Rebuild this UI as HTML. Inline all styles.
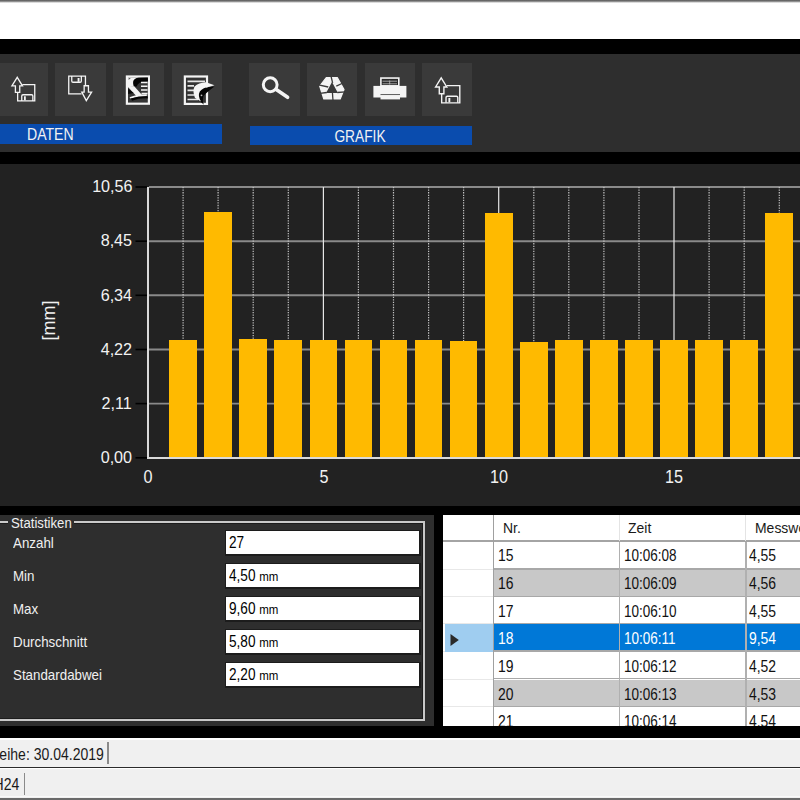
<!DOCTYPE html>
<html><head><meta charset="utf-8"><style>
html,body{margin:0;padding:0;}
body{width:800px;height:800px;position:relative;overflow:hidden;background:#000;font-family:"Liberation Sans", sans-serif;}
body>div{position:absolute;}
.t{line-height:1;white-space:nowrap;}
</style></head><body>
<div style="left:0px;top:1.5px;width:800px;height:37.5px;background:#ffffff;"></div>
<div style="left:0px;top:0px;width:800px;height:2.5px;background:linear-gradient(#5e5e5e 0%, #707070 35%, #ffffff 100%);"></div>
<div style="left:0px;top:39px;width:800px;height:15px;background:#000000;"></div>
<div style="left:0px;top:54px;width:800px;height:98px;background:#2e2e2e;"></div>
<div style="left:-2.6px;top:63.4px;width:50.5px;height:52.2px;background:#3a3a3a;"></div>
<div style="left:55.2px;top:63.4px;width:50.5px;height:52.2px;background:#3a3a3a;"></div>
<div style="left:113px;top:63.4px;width:50.5px;height:52.2px;background:#3a3a3a;"></div>
<div style="left:171.6px;top:63.4px;width:50.5px;height:52.2px;background:#3a3a3a;"></div>
<div style="left:249.4px;top:63.4px;width:50.5px;height:52.2px;background:#3a3a3a;"></div>
<div style="left:306.9px;top:63.4px;width:50.5px;height:52.2px;background:#3a3a3a;"></div>
<div style="left:364.5px;top:63.4px;width:50.5px;height:52.2px;background:#3a3a3a;"></div>
<div style="left:421.9px;top:63.4px;width:50.5px;height:52.2px;background:#3a3a3a;"></div>
<div style="left:-130px;top:124px;width:352px;height:20px;background:#0a4cae;"></div>
<div style="left:249.5px;top:125.8px;width:222.7px;height:19.3px;background:#0a4cae;"></div>
<div class="t" style="left:27.2px;top:127.06px;font-size:16px;color:#f2f2f2;transform:scaleX(0.88);transform-origin:0 0;">DATEN</div>
<div class="t" style="left:59.5px;width:600px;text-align:center;top:129.06px;font-size:16px;color:#f2f2f2;transform:scaleX(0.86);transform-origin:50% 0;">GRAFIK</div>
<svg style="position:absolute;left:-2.5px;top:63px;overflow:visible" width="51" height="52" viewBox="0 0 51 52"><g fill="none" stroke="#f4f4f4" stroke-width="1.3">
<path d="M19.2 14.3 L13.9 22.95 L17.4 22.95 L17.4 29.35 L21.75 29.35 L21.75 22.95 L24.5 22.95 Z" stroke-linejoin="miter"/>
<path d="M24.3 21.65 H36.75 V37.95 H19.65 V29.6"/>
<path d="M23.75 37.95 V33 Q23.75 31.75 25 31.75 H33.6 Q34.85 31.75 34.85 33 V37.95"/>
</g><rect x="26" y="33.3" width="1.8" height="4" fill="#f4f4f4"/></svg>
<svg style="position:absolute;left:55px;top:63px;overflow:visible" width="51" height="52" viewBox="0 0 51 52"><g fill="none" stroke="#f4f4f4" stroke-width="1.3">
<path d="M26.6 30.85 H13.75 V13.05 H30.45 V22.6"/>
<path d="M16.75 13.05 V18 Q16.75 19.25 18 19.25 H25.1 Q26.35 19.25 26.35 18 V13.05"/>
<path d="M29.15 22.75 H33.45 V29.15 H36.6 L31.3 37.6 L26.8 29.15 H29.15 Z" stroke-linejoin="miter"/>
</g><rect x="22.6" y="15" width="1.9" height="3.8" fill="#f4f4f4"/></svg>
<svg style="position:absolute;left:113px;top:63px;overflow:visible" width="51" height="52" viewBox="0 0 51 52"><rect x="13.9" y="13.5" width="22" height="27.2" fill="#353535" stroke="#f4f4f4" stroke-width="2.2"/>
<path d="M14.5 14.5 L25 14.5 Q20.6 16 20.3 19 Q20.2 21.5 20.9 23.6 L14.5 24.2 Z" fill="#f4f4f4"/>
<path d="M20.9 23.6 Q19.6 20 20.5 17.8 Q22 15 26 14.7 L34.9 14.6 L34.9 18.6 Q29 18.6 27 19.6 Q24.5 21 23.6 23.6 Z" fill="#050505"/>
<path d="M28 19.6 H34.5 M28 23.2 H34.5 M28 27 H34.5 M28.5 30.5 H34.5" stroke="#f4f4f4" stroke-width="1.5"/>
<path d="M14.5 23.6 L21.2 23.3 L28.8 31.8 L23.5 33.2 Z" fill="#f4f4f4"/>
<path d="M15.1 25.6 L15.1 31 L20.6 29.9 Z" fill="#080808"/>
<path d="M15.6 15.2 L17.8 15.2 L15.6 16.8 Z" fill="#222"/>
<path d="M16.5 34.2 Q24 31 33.8 31.2 L33.8 33.1 Q25 33.1 17.5 35.6 Z" fill="#f4f4f4"/>
<path d="M18 35.6 Q25 33.1 34.8 33.3 V35.4 Q26 35.1 19 37.8 Z" fill="#050505"/></svg>
<svg style="position:absolute;left:171px;top:63px;overflow:visible" width="51" height="52" viewBox="0 0 51 52"><rect x="13.85" y="13.5" width="22.15" height="27.4" fill="#333" stroke="#f4f4f4" stroke-width="2.2"/>
<path d="M16.5 18.3 H34 M16.5 22.8 H23 M16.5 27.4 H23 M16.5 32 H23.5 M16.5 36.5 H27" stroke="#e6e6e6" stroke-width="1.7"/>
<path d="M27.5 27 Q31.5 24.5 43.5 23.5 Q36 29 32.5 33 Q31 38 33 41.8 Q25.5 37 27.5 27 Z" fill="#050505"/>
<path d="M24 35 Q21.3 28 23.5 23.5 Q27.5 19.8 35 19.3 L43.5 22.3 L38.5 23.8 Q32 24.5 28.8 28.5 Q26.5 33 30 38.5 Z" fill="#f4f4f4"/>
<circle cx="30.5" cy="32.3" r="0.9" fill="#bbb"/></svg>
<svg style="position:absolute;left:249px;top:63px;overflow:visible" width="51" height="52" viewBox="0 0 51 52"><circle cx="21.2" cy="21.75" r="6.9" fill="none" stroke="#f4f4f4" stroke-width="3"/>
<path d="M27.6 26.8 L38.6 34.3" stroke="#f4f4f4" stroke-width="3.6" stroke-linecap="round"/></svg>
<svg style="position:absolute;left:306.5px;top:63px;overflow:visible" width="51" height="52" viewBox="0 0 51 52"><path fill-rule="evenodd" fill="#f4f4f4" stroke="#f4f4f4" stroke-width="1.2" stroke-linejoin="round" d="M19.3 14.5 L30.3 14.5 L37 26.5 L33.2 36 L16.8 36 L12.7 23 Z M25 17.6 L18 30.6 L32 30.6 Z"/>
<g stroke="#3a3a3a" stroke-width="1.3" fill="none">
<path d="M24 13 L25.6 19.8"/><path d="M11.5 21.8 L21.2 24"/><path d="M12.8 30.3 L19.8 29.5"/>
<path d="M25.4 29.5 L26 37.5"/><path d="M30.3 29.5 L38.5 28.8"/><path d="M29.3 23.2 L36 20"/>
</g></svg>
<svg style="position:absolute;left:364.5px;top:63px;overflow:visible" width="51" height="52" viewBox="0 0 51 52"><rect x="15.9" y="15.05" width="17.9" height="7.8" fill="#2a2a2a" stroke="#f4f4f4" stroke-width="1.6"/>
<path d="M17.5 18.2 H32 M17.5 20.8 H32 M24.7 17.5 V21.5" stroke="#bdbdbd" stroke-width="0.8"/>
<rect x="8.4" y="22.9" width="33" height="11.6" fill="#f4f4f4"/>
<rect x="15.5" y="31.1" width="19.5" height="1.1" fill="#555"/>
<rect x="15.5" y="32.2" width="19.5" height="4.2" fill="#f4f4f4"/></svg>
<svg style="position:absolute;left:422px;top:63px;overflow:visible" width="51" height="52" viewBox="0 0 51 52"><g transform="translate(19.3 14.8) scale(1.06) translate(-19.3 -14.3)"><g fill="none" stroke="#f4f4f4" stroke-width="1.3">
<path d="M19.2 14.3 L13.9 22.95 L17.4 22.95 L17.4 29.35 L21.75 29.35 L21.75 22.95 L24.5 22.95 Z" stroke-linejoin="miter"/>
<path d="M24.3 21.65 H36.75 V37.95 H19.65 V29.6"/>
<path d="M23.75 37.95 V33 Q23.75 31.75 25 31.75 H33.6 Q34.85 31.75 34.85 33 V37.95"/>
</g><rect x="26" y="33.3" width="1.8" height="4" fill="#f4f4f4"/></g></svg>
<div style="left:0px;top:152px;width:800px;height:12px;background:#000;"></div>
<div style="left:0px;top:164px;width:800px;height:342px;background:#222222;"></div>
<svg style="position:absolute;left:0px;top:0px;overflow:visible" width="800" height="800" viewBox="0 0 800 800"><path d="M149 187.0 H800" stroke="#8a8a8a" stroke-width="1.9"/><path d="M149 241.2 H800" stroke="#8a8a8a" stroke-width="1.9"/><path d="M149 295.3 H800" stroke="#8a8a8a" stroke-width="1.9"/><path d="M149 349.5 H800" stroke="#8a8a8a" stroke-width="1.9"/><path d="M149 403.6 H800" stroke="#8a8a8a" stroke-width="1.9"/><path d="M135.5 187.0 H147" stroke="#000" stroke-width="1.6"/><path d="M135.5 241.2 H147" stroke="#000" stroke-width="1.6"/><path d="M135.5 295.3 H147" stroke="#000" stroke-width="1.6"/><path d="M135.5 349.5 H147" stroke="#000" stroke-width="1.6"/><path d="M135.5 403.6 H147" stroke="#000" stroke-width="1.6"/><path d="M135.5 457.8 H147" stroke="#000" stroke-width="1.6"/><path d="M183.1 187.0 V457.8" stroke="#c4c4c4" stroke-width="1.2" stroke-dasharray="1.3 1.25"/><path d="M218.1 187.0 V457.8" stroke="#c4c4c4" stroke-width="1.2" stroke-dasharray="1.3 1.25"/><path d="M253.2 187.0 V457.8" stroke="#c4c4c4" stroke-width="1.2" stroke-dasharray="1.3 1.25"/><path d="M288.3 187.0 V457.8" stroke="#c4c4c4" stroke-width="1.2" stroke-dasharray="1.3 1.25"/><path d="M323.4 187.0 V457.8" stroke="#e6e6e6" stroke-width="1.2"/><path d="M358.4 187.0 V457.8" stroke="#c4c4c4" stroke-width="1.2" stroke-dasharray="1.3 1.25"/><path d="M393.5 187.0 V457.8" stroke="#c4c4c4" stroke-width="1.2" stroke-dasharray="1.3 1.25"/><path d="M428.6 187.0 V457.8" stroke="#c4c4c4" stroke-width="1.2" stroke-dasharray="1.3 1.25"/><path d="M463.6 187.0 V457.8" stroke="#c4c4c4" stroke-width="1.2" stroke-dasharray="1.3 1.25"/><path d="M498.7 187.0 V457.8" stroke="#e6e6e6" stroke-width="1.2"/><path d="M533.8 187.0 V457.8" stroke="#c4c4c4" stroke-width="1.2" stroke-dasharray="1.3 1.25"/><path d="M568.8 187.0 V457.8" stroke="#c4c4c4" stroke-width="1.2" stroke-dasharray="1.3 1.25"/><path d="M603.9 187.0 V457.8" stroke="#c4c4c4" stroke-width="1.2" stroke-dasharray="1.3 1.25"/><path d="M639.0 187.0 V457.8" stroke="#c4c4c4" stroke-width="1.2" stroke-dasharray="1.3 1.25"/><path d="M674.0 187.0 V457.8" stroke="#e6e6e6" stroke-width="1.2"/><path d="M709.1 187.0 V457.8" stroke="#c4c4c4" stroke-width="1.2" stroke-dasharray="1.3 1.25"/><path d="M744.2 187.0 V457.8" stroke="#c4c4c4" stroke-width="1.2" stroke-dasharray="1.3 1.25"/><path d="M779.3 187.0 V457.8" stroke="#c4c4c4" stroke-width="1.2" stroke-dasharray="1.3 1.25"/></svg>
<div style="left:169.22px;top:340px;width:27.7px;height:117.8px;background:#ffba00;"></div>
<div style="left:204.29px;top:211.6px;width:27.7px;height:246.2px;background:#ffba00;"></div>
<div style="left:239.36px;top:338.8px;width:27.7px;height:119.0px;background:#ffba00;"></div>
<div style="left:274.43px;top:340px;width:27.7px;height:117.8px;background:#ffba00;"></div>
<div style="left:309.5px;top:340px;width:27.7px;height:117.8px;background:#ffba00;"></div>
<div style="left:344.57px;top:340px;width:27.7px;height:117.8px;background:#ffba00;"></div>
<div style="left:379.64px;top:340px;width:27.7px;height:117.8px;background:#ffba00;"></div>
<div style="left:414.71px;top:340px;width:27.7px;height:117.8px;background:#ffba00;"></div>
<div style="left:449.78px;top:341.2px;width:27.7px;height:116.6px;background:#ffba00;"></div>
<div style="left:484.85px;top:212.5px;width:27.7px;height:245.3px;background:#ffba00;"></div>
<div style="left:519.92px;top:341.5px;width:27.7px;height:116.3px;background:#ffba00;"></div>
<div style="left:554.99px;top:340px;width:27.7px;height:117.8px;background:#ffba00;"></div>
<div style="left:590.06px;top:340px;width:27.7px;height:117.8px;background:#ffba00;"></div>
<div style="left:625.13px;top:340px;width:27.7px;height:117.8px;background:#ffba00;"></div>
<div style="left:660.2px;top:340px;width:27.7px;height:117.8px;background:#ffba00;"></div>
<div style="left:695.27px;top:340px;width:27.7px;height:117.8px;background:#ffba00;"></div>
<div style="left:730.34px;top:340px;width:27.7px;height:117.8px;background:#ffba00;"></div>
<div style="left:765.41px;top:212.5px;width:27.7px;height:245.3px;background:#ffba00;"></div>
<div style="left:147.2px;top:187px;width:2px;height:271px;background:#dadada;"></div>
<div style="left:147.2px;top:456.8px;width:653px;height:2px;background:#dadada;"></div>
<div class="t" style="right:667.7px;top:178.21px;font-size:17px;color:#f2f2f2;transform:scaleX(0.95);transform-origin:100% 0;">10,56</div>
<div class="t" style="right:667.7px;top:232.37px;font-size:17px;color:#f2f2f2;transform:scaleX(0.95);transform-origin:100% 0;">8,45</div>
<div class="t" style="right:667.7px;top:286.53px;font-size:17px;color:#f2f2f2;transform:scaleX(0.95);transform-origin:100% 0;">6,34</div>
<div class="t" style="right:667.7px;top:340.69px;font-size:17px;color:#f2f2f2;transform:scaleX(0.95);transform-origin:100% 0;">4,22</div>
<div class="t" style="right:667.7px;top:394.85px;font-size:17px;color:#f2f2f2;transform:scaleX(0.95);transform-origin:100% 0;">2,11</div>
<div class="t" style="right:667.7px;top:449.01px;font-size:17px;color:#f2f2f2;transform:scaleX(0.95);transform-origin:100% 0;">0,00</div>
<div class="t" style="left:-151.7px;width:600px;text-align:center;top:468.06px;font-size:18px;color:#f2f2f2;transform:scaleX(0.9);transform-origin:50% 0;">0</div>
<div class="t" style="left:23.650000000000034px;width:600px;text-align:center;top:468.06px;font-size:18px;color:#f2f2f2;transform:scaleX(0.9);transform-origin:50% 0;">5</div>
<div class="t" style="left:199.0px;width:600px;text-align:center;top:468.06px;font-size:18px;color:#f2f2f2;transform:scaleX(0.9);transform-origin:50% 0;">10</div>
<div class="t" style="left:374.3499999999999px;width:600px;text-align:center;top:468.06px;font-size:18px;color:#f2f2f2;transform:scaleX(0.9);transform-origin:50% 0;">15</div>
<div class="t" style="left:18px;top:311px;width:60px;text-align:center;font-size:19px;color:#f2f2f2;transform:rotate(-90deg) scaleX(0.95);">[mm]</div>
<div style="left:0px;top:506px;width:800px;height:9px;background:#000;"></div>
<div style="left:0px;top:515px;width:433.5px;height:210.5px;background:#2e2e2e;"></div>
<div style="left:433.5px;top:515px;width:9px;height:211px;background:#000;"></div>
<div style="left:0px;top:521.2px;width:7.5px;height:1.7px;background:#cacaca;"></div>
<div style="left:74px;top:521.2px;width:350.5px;height:1.7px;background:#cacaca;"></div>
<div style="left:423px;top:521.2px;width:1.7px;height:200.3px;background:#c8c8c8;"></div>
<div style="left:0px;top:523px;width:7.5px;height:1px;background:#1c1c1c;"></div>
<div style="left:74px;top:523px;width:349.3px;height:1px;background:#1c1c1c;"></div>
<div style="left:422.3px;top:523px;width:1px;height:196.8px;background:#1c1c1c;"></div>
<div style="left:0px;top:718.3px;width:422.3px;height:1px;background:#1c1c1c;"></div>
<div style="left:0px;top:719.3px;width:424.7px;height:1.8px;background:#c8c8c8;"></div>
<div class="t" style="left:10.5px;top:515.95px;font-size:14px;color:#f0f0f0;transform:scaleX(0.94);transform-origin:0 0;">Statistiken</div>
<div class="t" style="left:13px;top:535.73px;font-size:14.5px;color:#f0f0f0;transform:scaleX(0.92);transform-origin:0 0;">Anzahl</div>
<div style="left:224.5px;top:529.5px;width:196.5px;height:26.5px;background:#1c1c1c;"></div>
<div style="left:226.3px;top:531.3px;width:192.8px;height:23px;background:#ffffff;"></div>
<div class="t" style="left:229px;top:535.26px;font-size:16px;color:#000;transform:scaleX(0.85);transform-origin:0 0;">27</div>
<div class="t" style="left:13px;top:568.73px;font-size:14.5px;color:#f0f0f0;transform:scaleX(0.92);transform-origin:0 0;">Min</div>
<div style="left:224.5px;top:562.5px;width:196.5px;height:26.5px;background:#1c1c1c;"></div>
<div style="left:226.3px;top:564.3px;width:192.8px;height:23px;background:#ffffff;"></div>
<div class="t" style="left:229px;top:568.26px;font-size:16px;color:#000;transform:scaleX(0.85);transform-origin:0 0;">4,50 <span style="font-size:13.5px">mm</span></div>
<div class="t" style="left:13px;top:601.73px;font-size:14.5px;color:#f0f0f0;transform:scaleX(0.92);transform-origin:0 0;">Max</div>
<div style="left:224.5px;top:595.5px;width:196.5px;height:26.5px;background:#1c1c1c;"></div>
<div style="left:226.3px;top:597.3px;width:192.8px;height:23px;background:#ffffff;"></div>
<div class="t" style="left:229px;top:601.26px;font-size:16px;color:#000;transform:scaleX(0.85);transform-origin:0 0;">9,60 <span style="font-size:13.5px">mm</span></div>
<div class="t" style="left:13px;top:634.73px;font-size:14.5px;color:#f0f0f0;transform:scaleX(0.92);transform-origin:0 0;">Durchschnitt</div>
<div style="left:224.5px;top:628.5px;width:196.5px;height:26.5px;background:#1c1c1c;"></div>
<div style="left:226.3px;top:630.3px;width:192.8px;height:23px;background:#ffffff;"></div>
<div class="t" style="left:229px;top:634.26px;font-size:16px;color:#000;transform:scaleX(0.85);transform-origin:0 0;">5,80 <span style="font-size:13.5px">mm</span></div>
<div class="t" style="left:13px;top:667.73px;font-size:14.5px;color:#f0f0f0;transform:scaleX(0.92);transform-origin:0 0;">Standardabwei</div>
<div style="left:224.5px;top:661.5px;width:196.5px;height:26.5px;background:#1c1c1c;"></div>
<div style="left:226.3px;top:663.3px;width:192.8px;height:23px;background:#ffffff;"></div>
<div class="t" style="left:229px;top:667.26px;font-size:16px;color:#000;transform:scaleX(0.85);transform-origin:0 0;">2,20 <span style="font-size:13.5px">mm</span></div>
<div style="left:442.5px;top:515.3px;width:357.5px;height:211.1px;background:#ffffff;"></div>
<div style="left:442.5px;top:540.2px;width:357.5px;height:1.6px;background:#a4a4a4;"></div>
<div style="left:492.6px;top:515.3px;width:1.4px;height:211px;background:#a0a0a0;"></div>
<div style="left:619px;top:515.3px;width:1.2px;height:25.3px;background:#e4e4e4;"></div>
<div style="left:745.3px;top:515.3px;width:1.2px;height:25.3px;background:#e4e4e4;"></div>
<div class="t" style="left:503.3px;top:520.48px;font-size:15.5px;color:#1a1a1a;transform:scaleX(0.9);transform-origin:0 0;">Nr.</div>
<div class="t" style="left:627.6px;top:520.48px;font-size:15.5px;color:#1a1a1a;transform:scaleX(0.9);transform-origin:0 0;">Zeit</div>
<div class="t" style="left:754.6px;top:520.48px;font-size:15.5px;color:#1a1a1a;transform:scaleX(0.9);transform-origin:0 0;">Messwert</div>
<div style="left:494px;top:541.75px;width:306px;height:27.850000000000023px;background:#ffffff;"></div>
<div style="left:494px;top:568.4px;width:306px;height:1.2px;background:#a8a8a8;"></div>
<div style="left:442.5px;top:568.6px;width:50px;height:1px;background:#e8e8e8;"></div>
<div class="t" style="left:498px;top:547.76px;font-size:16px;color:#111111;transform:scaleX(0.87);transform-origin:0 0;">15</div>
<div class="t" style="left:623.8px;top:547.76px;font-size:16px;color:#111111;transform:scaleX(0.845);transform-origin:0 0;">10:06:08</div>
<div class="t" style="left:749.2px;top:547.76px;font-size:16px;color:#111111;transform:scaleX(0.87);transform-origin:0 0;">4,55</div>
<div style="left:494px;top:569.6px;width:306px;height:27.399999999999977px;background:#c8c8c8;"></div>
<div style="left:494px;top:595.8px;width:306px;height:1.2px;background:#a8a8a8;"></div>
<div style="left:442.5px;top:596px;width:50px;height:1px;background:#e8e8e8;"></div>
<div class="t" style="left:498px;top:575.56px;font-size:16px;color:#111111;transform:scaleX(0.87);transform-origin:0 0;">16</div>
<div class="t" style="left:623.8px;top:575.56px;font-size:16px;color:#111111;transform:scaleX(0.845);transform-origin:0 0;">10:06:09</div>
<div class="t" style="left:749.2px;top:575.56px;font-size:16px;color:#111111;transform:scaleX(0.87);transform-origin:0 0;">4,56</div>
<div style="left:494px;top:597px;width:306px;height:27.299999999999955px;background:#ffffff;"></div>
<div style="left:494px;top:623.0999999999999px;width:306px;height:1.2px;background:#a8a8a8;"></div>
<div style="left:442.5px;top:623.3px;width:50px;height:1px;background:#e8e8e8;"></div>
<div class="t" style="left:498px;top:603.56px;font-size:16px;color:#111111;transform:scaleX(0.87);transform-origin:0 0;">17</div>
<div class="t" style="left:623.8px;top:603.56px;font-size:16px;color:#111111;transform:scaleX(0.845);transform-origin:0 0;">10:06:10</div>
<div class="t" style="left:749.2px;top:603.56px;font-size:16px;color:#111111;transform:scaleX(0.87);transform-origin:0 0;">4,55</div>
<div style="left:494px;top:624.3px;width:306px;height:27.300000000000068px;background:#0078d7;"></div>
<div style="left:494px;top:650.4px;width:306px;height:1.2px;background:#a8a8a8;"></div>
<div style="left:442.5px;top:650.6px;width:50px;height:1px;background:#e8e8e8;"></div>
<div class="t" style="left:498px;top:631.26px;font-size:16px;color:#ffffff;transform:scaleX(0.87);transform-origin:0 0;">18</div>
<div class="t" style="left:623.8px;top:631.26px;font-size:16px;color:#ffffff;transform:scaleX(0.845);transform-origin:0 0;">10:06:11</div>
<div class="t" style="left:749.2px;top:631.26px;font-size:16px;color:#ffffff;transform:scaleX(0.87);transform-origin:0 0;">9,54</div>
<div style="left:494px;top:651.6px;width:306px;height:27.899999999999977px;background:#ffffff;"></div>
<div style="left:494px;top:678.3px;width:306px;height:1.2px;background:#a8a8a8;"></div>
<div style="left:442.5px;top:678.5px;width:50px;height:1px;background:#e8e8e8;"></div>
<div class="t" style="left:498px;top:659.16px;font-size:16px;color:#111111;transform:scaleX(0.87);transform-origin:0 0;">19</div>
<div class="t" style="left:623.8px;top:659.16px;font-size:16px;color:#111111;transform:scaleX(0.845);transform-origin:0 0;">10:06:12</div>
<div class="t" style="left:749.2px;top:659.16px;font-size:16px;color:#111111;transform:scaleX(0.87);transform-origin:0 0;">4,52</div>
<div style="left:494px;top:679.5px;width:306px;height:27.700000000000045px;background:#c8c8c8;"></div>
<div style="left:494px;top:706.0px;width:306px;height:1.2px;background:#a8a8a8;"></div>
<div style="left:442.5px;top:706.2px;width:50px;height:1px;background:#e8e8e8;"></div>
<div class="t" style="left:498px;top:686.76px;font-size:16px;color:#111111;transform:scaleX(0.87);transform-origin:0 0;">20</div>
<div class="t" style="left:623.8px;top:686.76px;font-size:16px;color:#111111;transform:scaleX(0.845);transform-origin:0 0;">10:06:13</div>
<div class="t" style="left:749.2px;top:686.76px;font-size:16px;color:#111111;transform:scaleX(0.87);transform-origin:0 0;">4,53</div>
<div style="left:494px;top:707.2px;width:306px;height:27.799999999999955px;background:#ffffff;"></div>
<div style="left:494px;top:733.8px;width:306px;height:1.2px;background:#a8a8a8;"></div>
<div style="left:442.5px;top:734px;width:50px;height:1px;background:#e8e8e8;"></div>
<div class="t" style="left:498px;top:714.46px;font-size:16px;color:#111111;transform:scaleX(0.87);transform-origin:0 0;">21</div>
<div class="t" style="left:623.8px;top:714.46px;font-size:16px;color:#111111;transform:scaleX(0.845);transform-origin:0 0;">10:06:14</div>
<div class="t" style="left:749.2px;top:714.46px;font-size:16px;color:#111111;transform:scaleX(0.87);transform-origin:0 0;">4,54</div>
<div style="left:619px;top:542.2px;width:1.3px;height:184px;background:#b0b0b0;"></div>
<div style="left:745.3px;top:542.2px;width:1.3px;height:184px;background:#b0b0b0;"></div>
<div style="left:492.6px;top:515.3px;width:1.4px;height:211px;background:#a0a0a0;"></div>
<div style="left:445.2px;top:624.2px;width:47.4px;height:27.8px;background:#9fcdf0;"></div>
<svg style="position:absolute;left:0px;top:0px;overflow:visible" width="800" height="800" viewBox="0 0 800 800"><path d="M450.5 634 L458.8 640 L450.5 646 Z" fill="#2a2a2a"/></svg>
<div style="left:433.5px;top:725.5px;width:9px;height:1px;background:#000;"></div>
<div style="left:0px;top:725.5px;width:433.5px;height:12.8px;background:#000;"></div>
<div style="left:433.5px;top:726.4px;width:366.5px;height:11.9px;background:#000;"></div>
<div style="left:0px;top:738.3px;width:800px;height:28.5px;background:#f0f0f0;"></div>
<div style="left:0px;top:738.3px;width:800px;height:1.4px;background:#ffffff;"></div>
<div style="left:0px;top:766.8px;width:800px;height:1.6px;background:#2c2c2c;"></div>
<div style="left:0px;top:768.4px;width:800px;height:1.4px;background:#ffffff;"></div>
<div style="left:0px;top:768.6px;width:800px;height:29.6px;background:#f0f0f0;"></div>
<div style="left:0px;top:796.3px;width:800px;height:1.2px;background:#fafafa;"></div>
<div style="left:0px;top:797.5px;width:800px;height:2.5px;background:#6a6a6a;"></div>
<div style="left:107.2px;top:742px;width:1.4px;height:22px;background:#8a8a8a;"></div>
<div style="left:24px;top:773px;width:1.4px;height:21.5px;background:#8a8a8a;"></div>
<div class="t" style="right:696.3px;top:745.83px;font-size:16.5px;color:#1a1a1a;transform:scaleX(0.85);transform-origin:100% 0;">Reihe: 30.04.2019</div>
<div class="t" style="right:780.7px;top:776.03px;font-size:16.5px;color:#1a1a1a;transform:scaleX(0.85);transform-origin:100% 0;">H24</div>

</body></html>
